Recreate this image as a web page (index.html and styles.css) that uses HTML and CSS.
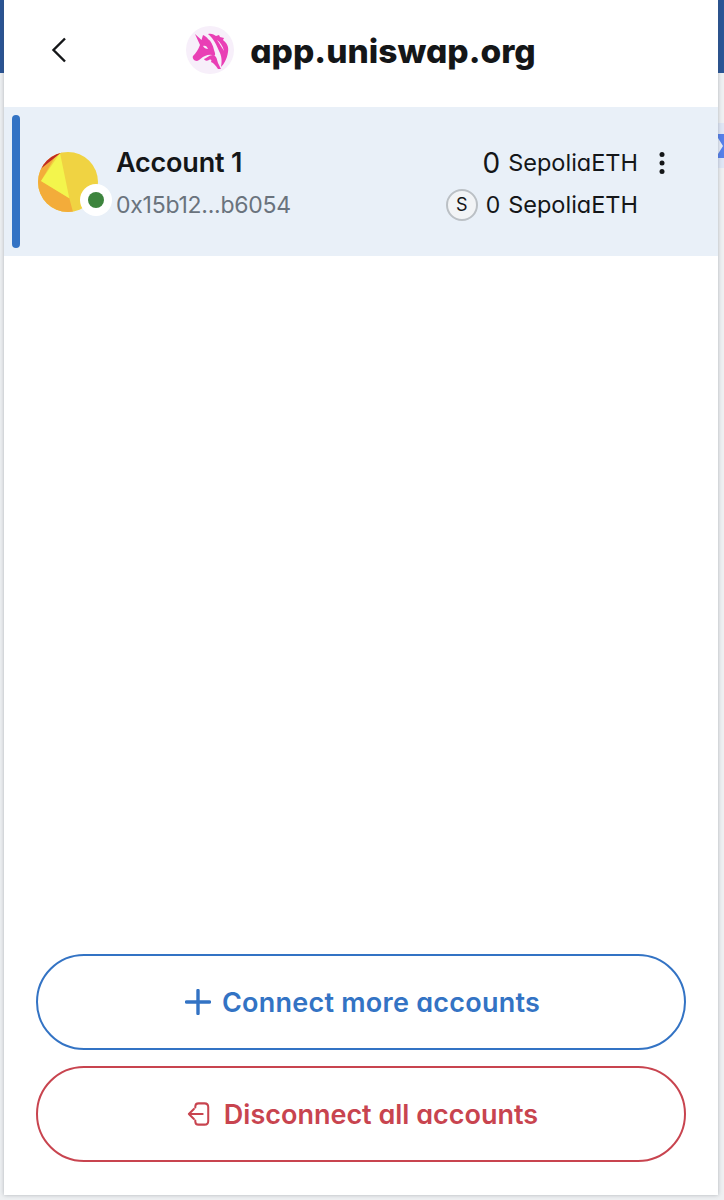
FILE: index.html
```html
<!DOCTYPE html>
<html lang="en">
<head>
<meta charset="utf-8">
<title>Connected accounts</title>
<link rel="stylesheet" href="styles.css">
</head>
<body>
<div class="stage">
  <div class="peek"><svg width="6" height="24" viewBox="0 0 6 24"><path d="M0 0h6v24H0z" fill="#5680ea"/><path d="M0 4l5 8-5 8z" fill="#e6edf8"/></svg></div>
  <main class="panel">
    <header class="header">
      <button class="back" aria-label="Back">
        <svg width="16" height="26" viewBox="0 0 16 26"><path d="M14 1.500L2.500 13 14 24.500" fill="none" stroke="#141618" stroke-width="2.400"/></svg>
      </button>
      <div class="site">
        <span class="site-icon">
          <svg width="48" height="48" viewBox="0 0 48 48">
            <path fill="#e93fb5" d="M9 8l6.500 6L17 9c2 1 4 2 5 4 3 2 5 6 6 11 1 3 2 5 0 6-3-2-6-1-9 0-3 1-5 4-8 5-3 0-5-3-4-5 3-3 5-6 7-11z"/>
            <path fill="#f7effa" d="M17 20c2-1 4 0 5 3-2 0-4-1-5-3z"/>
            <path fill="#e93fb5" d="M22 8c4-1 6 1 8 2l3-1 1 2 4 1-1 2c4 3 6 7 5 12-1 7-4 12-7 15 1-5 1-11-2-16-2-5-5-12-11-17z"/>
            <path fill="#f7effa" d="M31 14c3 2 6 6 7 11-2-3-4-7-7-11z"/>
            <path fill="#e93fb5" d="M18 33c3-1 5-4 9-4 4 1 4 5 5 8l3 6h-3c-3-4-4-6-7-7 1-2 0-3-2-2s-4 1-5-1z"/>
          </svg>
        </span>
        <h1 class="site-name">app.uniswap.org</h1>
      </div>
    </header>

    <section class="account">
      <span class="account-bar"></span>
      <div class="avatar-wrap">
        <svg class="avatar" width="60" height="60" viewBox="0 0 60 60">
          <rect width="60" height="60" fill="#f0d342"/>
          <path d="M0 0h20L3 29l28.300 17.300L35 60H0z" fill="#f3ac3a"/>
          <path d="M22 1L3 29l28.300 17.300z" fill="#f3f54c"/>
          <path d="M23.700 0H0v19L21 2.300z" fill="#c02a25"/>
        </svg>
        <span class="status"><span class="status-dot"></span></span>
      </div>
      <div class="account-info">
        <div class="account-name">Account 1</div>
        <div class="account-address">0x15b12...b6054</div>
      </div>
      <div class="balances">
        <div class="balance-main"><span class="amount">0</span><span class="unit">SepoliaETH</span></div>
        <div class="balance-sub"><span class="token">S</span><span class="sub-amount">0</span><span class="unit">SepoliaETH</span></div>
      </div>
      <button class="more" aria-label="More">
        <svg width="8" height="24" viewBox="0 0 8 24"><circle cx="4" cy="3.500" r="2.500"/><circle cx="4" cy="12" r="2.500"/><circle cx="4" cy="20.500" r="2.500"/></svg>
      </button>
    </section>

    <div class="actions">
      <button class="btn btn-connect">
        <svg width="26" height="26" viewBox="0 0 26 26"><path d="M13 1.500v23M1.500 13h23" fill="none" stroke="#3373c4" stroke-width="3.400" stroke-linecap="round"/></svg>
        Connect more accounts
      </button>
      <button class="btn btn-disconnect">
        <svg width="24" height="24" viewBox="0 0 26 26" fill="none" stroke="#c8444f" stroke-width="2.200" stroke-linecap="round" stroke-linejoin="round"><path d="M9 6V5c0-2 1.500-3.500 3.500-3.500H19c2.500 0 4 1.500 4 4v15c0 2.500-1.500 4-4 4h-6.500C10.500 24.500 9 23 9 21v-1"/><path d="M17 13H2M7.500 7.500L2 13l5.500 5.500"/></svg>
        Disconnect all accounts
      </button>
    </div>
  </main>
</div>
</body>
</html>
```
FILE: styles.css
```css
* { box-sizing: border-box; }
html, body { margin: 0; height: 100%; }
body {
  font-family: Inter, "Noto Sans", "Liberation Sans", sans-serif;
  font-feature-settings: "cv11" 1;
  color: #141618;
}
.stage {
  position: relative;
  height: 1200px;
  padding: 0 6px 5px 4px;
  background: linear-gradient(#2a5596 73px, #eef0f2 73px);
  overflow: hidden;
}
.peek {
  position: absolute;
  right: 0;
  top: 123px;
  width: 6px;
  height: 45px;
  padding-top: 11px;
  background: #dfe6f5;
}
.peek svg { display: block; }
.panel {
  position: relative;
  display: flex;
  flex-direction: column;
  height: 100%;
  background: #fff;
  box-shadow: 0 0 4px rgba(60, 70, 80, .35);
}
.header {
  position: relative;
  display: flex;
  justify-content: center;
  height: 107px;
  flex: none;
  padding-top: 26px;
}
.back {
  position: absolute;
  left: 47px;
  top: 37px;
  padding: 0;
  border: 0;
  background: none;
  line-height: 0;
}
.site {
  display: flex;
  align-items: center;
  gap: 16px;
  height: 48px;
}
.site-icon {
  width: 48px;
  height: 48px;
  line-height: 0;
  border-radius: 50%;
  background: #f7effa;
}
.site-name {
  margin: 2px 0 0;
  font-size: 33.500px;
  font-weight: 800;
  line-height: 40px;
}
.account {
  display: flex;
  align-items: center;
  height: 149px;
  flex: none;
  padding-left: 8px;
  background: #e9f0f8;
}
.account-bar {
  align-self: stretch;
  width: 8px;
  margin: 8px 0;
  border-radius: 4px;
  background: #3373c4;
}
.avatar-wrap {
  position: relative;
  width: 60px;
  height: 60px;
  margin: 1px 0 0 18px;
  flex: none;
}
.avatar { display: block; border-radius: 50%; }
.status {
  position: absolute;
  left: 42px;
  top: 32px;
  display: flex;
  align-items: center;
  justify-content: center;
  width: 32px;
  height: 32px;
  border-radius: 50%;
  background: #fff;
}
.status-dot {
  width: 16px;
  height: 16px;
  border-radius: 50%;
  background: #3d843d;
}
.account-info {
  display: flex;
  flex-direction: column;
  gap: 6px;
  margin: 4px 0 0 18px;
}
.account-name {
  font-size: 27px;
  font-weight: 600;
  letter-spacing: -.2px;
  line-height: 36px;
}
.account-address {
  font-size: 23px;
  letter-spacing: -.25px;
  line-height: 36px;
  color: #6a737d;
}
.balances {
  display: flex;
  flex-direction: column;
  align-items: flex-end;
  gap: 6px;
  margin: 4px 0 0 auto;
}
.balance-main, .balance-sub {
  display: flex;
  align-items: center;
  height: 36px;
}
.amount { font-size: 28px; margin-right: 8px; }
.sub-amount { font-size: 23px; margin-right: 8px; }
.unit { font-size: 23.500px; }
.token {
  display: flex;
  align-items: center;
  justify-content: center;
  width: 32px;
  height: 32px;
  margin-right: 8px;
  border: 2px solid #bbc0c5;
  border-radius: 50%;
  background: #f2f4f6;
  font-size: 18px;
}
.more {
  display: flex;
  align-self: flex-start;
  margin: 44px 52px 0 20px;
  padding: 0;
  border: 0;
  background: none;
}
.more svg { fill: #141618; }
.actions {
  display: flex;
  flex-direction: column;
  gap: 16px;
  margin-top: auto;
  padding: 0 32px 33px;
}
.btn {
  display: flex;
  align-items: center;
  justify-content: center;
  width: 100%;
  height: 96px;
  padding: 0 0 0 3px;
  border-radius: 48px;
  background: #fff;
  font-family: inherit;
  font-feature-settings: inherit;
  font-size: 27px;
  font-weight: 600;
}
.btn-connect { gap: 11px; letter-spacing: .25px; border: 2px solid #3373c4; color: #3373c4; }
.btn-disconnect { gap: 13px; border: 2px solid #c8444f; color: #c8444f; }
```
